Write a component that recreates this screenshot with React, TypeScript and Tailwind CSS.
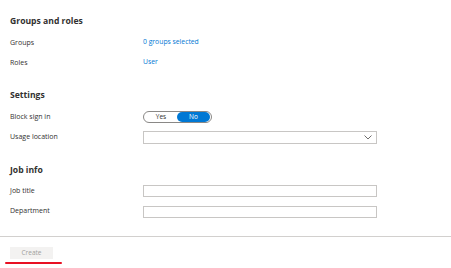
import React from "react";

const font = { fontFamily: '"Open Sans", "Noto Sans", sans-serif' };

function Row({ label, children, h = "h-[20px]" }: { label: string; children?: React.ReactNode; h?: string }) {
  return (
    <div className={`flex items-center ${h}`}>
      <div className="w-[133px] shrink-0 text-[7px] text-[#323130]">{label}</div>
      <div className="flex items-center">{children}</div>
    </div>
  );
}

function Heading({ children, mt }: { children: React.ReactNode; mt: string }) {
  return (
    <div className={`h-[12px] flex items-center text-[8.6px] font-bold text-[#323130] ${mt}`}>{children}</div>
  );
}

export default function App() {
  return (
    <div className="w-[451px] h-[268px] bg-white overflow-hidden relative" style={font}>
      <div className="pl-[10px] flex flex-col">
        <Heading mt="mt-[15px]">Groups and roles</Heading>
        <div className="mt-[6px]">
          <Row label="Groups">
            <span className="text-[6.8px] text-[#0078d4] -mt-[2px]">0 groups selected</span>
          </Row>
          <Row label="Roles">
            <span className="text-[6.8px] text-[#0078d4] -mt-[2px]">User</span>
          </Row>
        </div>
        <Heading mt="mt-[16px]">Settings</Heading>
        <div className="mt-[6px]">
          <Row label="Block sign in">
            <div className="w-[69px] h-[12px] rounded-full border border-[#8a8886] flex items-center p-[1px]">
              <div className="flex-1 text-center text-[6.5px] text-[#323130] leading-none">Yes</div>
              <div className="w-[33px] h-[10px] rounded-full bg-[#0078d4] text-white text-[6.5px] flex items-center justify-center leading-none">
                No
              </div>
            </div>
          </Row>
          <Row label="Usage location" h="h-[21px]">
            <div className="w-[234px] h-[13px] border border-[#c8c6c4] flex items-center justify-end pr-[4px]">
              <svg width="8" height="5" viewBox="0 0 8 5">
                <polyline points="0.5,0.5 4,4 7.5,0.5" fill="none" stroke="#605e5c" strokeWidth="0.9" />
              </svg>
            </div>
          </Row>
        </div>
        <Heading mt="mt-[16px]">Job info</Heading>
        <div className="mt-[5px]">
          <Row label="Job title">
            <div className="w-[234px] h-[12px] border border-[#c8c6c4]" />
          </Row>
          <Row label="Department" h="h-[21px]">
            <div className="w-[234px] h-[12px] border border-[#c8c6c4]" />
          </Row>
        </div>
      </div>
      <div className="mt-[14px] h-[1px] bg-[#d2d0ce] w-full" />
      <div className="pl-[10px] pt-[10px] relative">
        <div className="w-[43px] h-[12px] bg-[#f3f2f1] text-[6.5px] text-[#a19f9d] flex items-center justify-center">Create</div>
        <div className="absolute left-[5px] top-[25px] w-[57px] h-[1.5px] bg-[#e81123] rounded-full" />
      </div>
    </div>
  );
}
